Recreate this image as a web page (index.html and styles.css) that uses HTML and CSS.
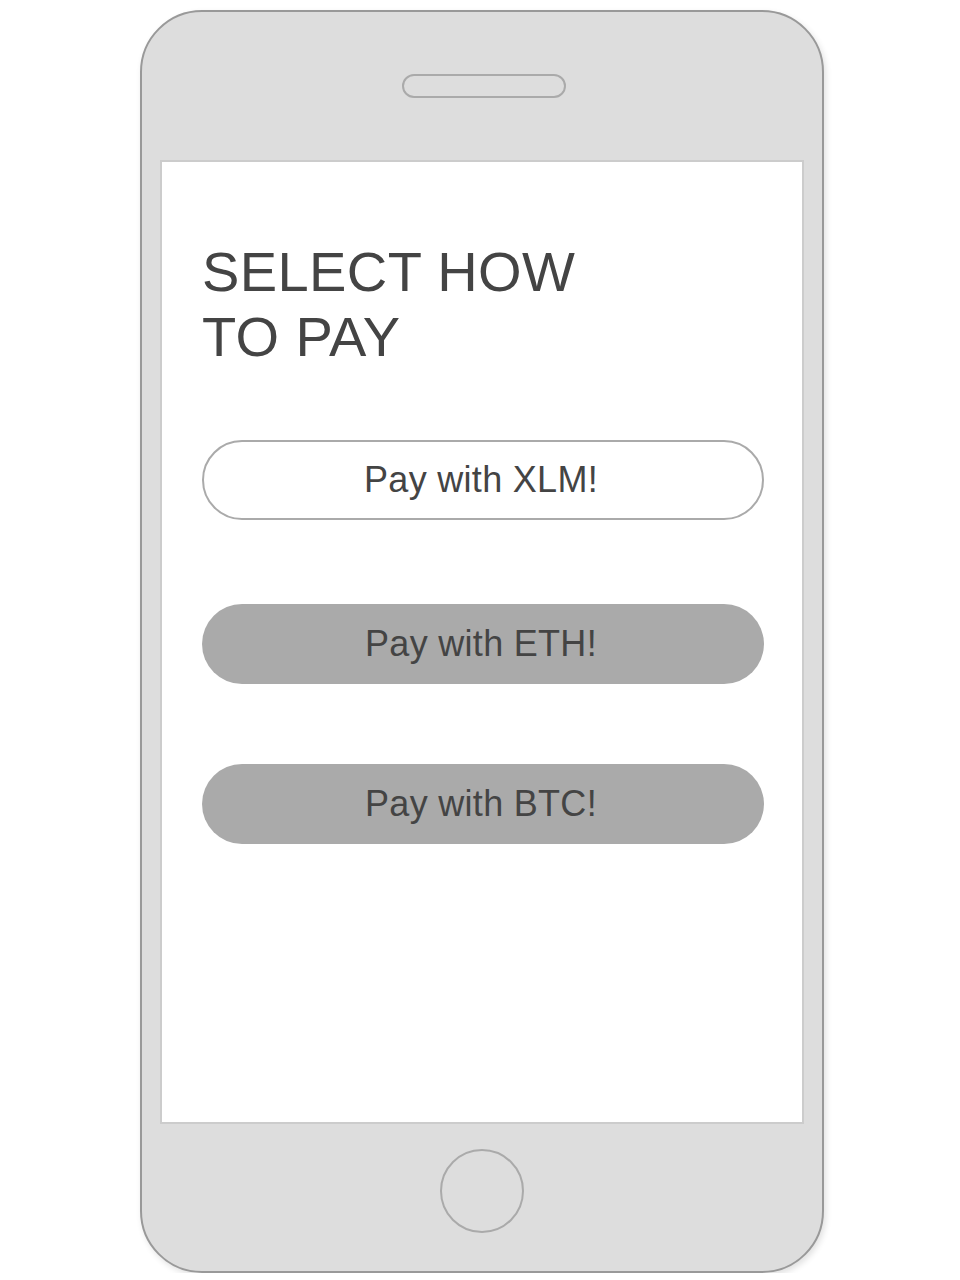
FILE: index.html
```html
<!DOCTYPE html>
<html>
<head>
<meta charset="utf-8">
<link rel="stylesheet" href="styles.css">
</head>
<body>
<div class="phone">
  <div class="speaker"></div>
  <div class="screen">
    <h1 class="title">SELECT HOW<br>TO PAY</h1>
    <div class="btn btn-outline">Pay with XLM!</div>
    <div class="btn btn-fill btn-eth">Pay with ETH!</div>
    <div class="btn btn-fill btn-btc">Pay with BTC!</div>
  </div>
  <div class="home"></div>
</div>
</body>
</html>
```
FILE: styles.css
```css
html, body {
  margin: 0;
  padding: 0;
  background: #ffffff;
}
body {
  font-family: "Liberation Sans", Arial, sans-serif;
  color: #444444;
}
.phone {
  box-sizing: border-box;
  margin: 10px 0 0 140px;
  width: 684px;
  height: 1263px;
  background: #dddddd;
  border: 2px solid #999999;
  border-radius: 62px;
  box-shadow: 2px 3px 6px rgba(0,0,0,0.12);
  display: flex;
  flex-direction: column;
  align-items: center;
  padding-top: 62px;
}
.speaker {
  box-sizing: border-box;
  width: 164px;
  height: 24px;
  border: 2px solid #aaaaaa;
  border-radius: 12px;
  margin-left: 4px;
}
.screen {
  box-sizing: border-box;
  margin-top: 62px;
  width: 644px;
  height: 964px;
  background: #ffffff;
  border: 2px solid #cccccc;
  padding: 77px 0 0 40px;
}
.title {
  margin: 0 0 71px 0;
  font-size: 56px;
  line-height: 65px;
  font-weight: normal;
  letter-spacing: 0.4px;
  color: #444444;
}
.btn {
  box-sizing: border-box;
  width: 562px;
  height: 80px;
  border-radius: 40px;
  display: flex;
  align-items: center;
  justify-content: center;
  padding-right: 4px;
  font-size: 36px;
  letter-spacing: 0.3px;
  color: #444444;
}
.btn-outline {
  border: 2px solid #aaaaaa;
  background: #ffffff;
}
.btn-fill {
  background: #aaaaaa;
}
.btn-eth {
  margin-top: 84px;
}
.btn-btc {
  margin-top: 80px;
}
.home {
  box-sizing: border-box;
  margin-top: 25px;
  width: 84px;
  height: 84px;
  border: 2px solid #aaaaaa;
  border-radius: 50%;
}
```
